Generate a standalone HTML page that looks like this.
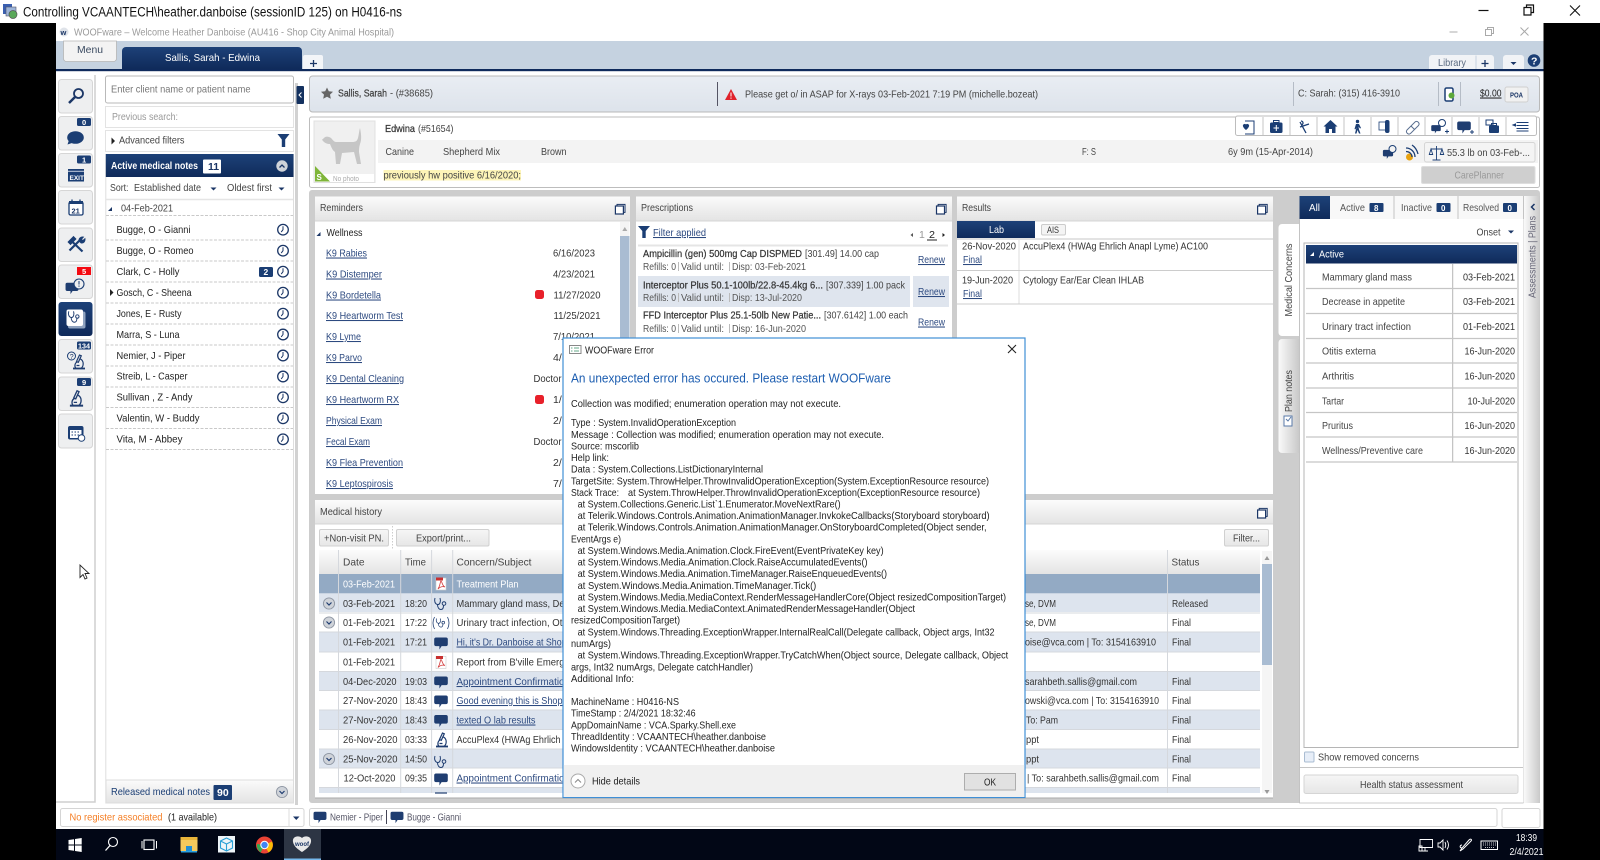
<!DOCTYPE html>
<html><head><meta charset="utf-8"><title>WOOFware</title>
<style>
html,body{margin:0;padding:0;background:#000;width:1600px;height:860px;overflow:hidden}
svg{display:block;filter:blur(.3px)}
text{font-family:"Liberation Sans",sans-serif;font-size:10.5px;fill:#333;white-space:pre}
.l{fill:#2d4a80;text-decoration:underline}
.w{fill:#fff}
.g{fill:#999}
.n{fill:#1b3666}
.b{font-weight:bold}
.s{stroke:#333;stroke-width:.22px}
.d{fill:#222}
</style></head><body>
<svg width="1600" height="860" viewBox="0 0 1600 860" xmlns="http://www.w3.org/2000/svg">
<defs>
<linearGradient id="nav" x1="0" y1="0" x2="0" y2="1"><stop offset="0" stop-color="#1d4178"/><stop offset="1" stop-color="#0f2a5a"/></linearGradient>
<linearGradient id="hd" x1="0" y1="0" x2="0" y2="1"><stop offset="0" stop-color="#fbfbfb"/><stop offset="1" stop-color="#e3e3e3"/></linearGradient>
<linearGradient id="cb" x1="0" y1="0" x2="0" y2="1"><stop offset="0" stop-color="#e9edf3"/><stop offset="1" stop-color="#dde3eb"/></linearGradient>
<linearGradient id="rail" x1="0" y1="0" x2="1" y2="0"><stop offset="0" stop-color="#fafafa"/><stop offset="1" stop-color="#c9c9c9"/></linearGradient>
<linearGradient id="btn" x1="0" y1="0" x2="0" y2="1"><stop offset="0" stop-color="#f6f6f6"/><stop offset="1" stop-color="#e6e6e6"/></linearGradient>
<g id="clk"><circle r="5.3" fill="#fff" stroke="#1b3666" stroke-width="1.3"/><path d="M0-3.5V0L-1.8 2.4" fill="none" stroke="#1b3666" stroke-width="1"/></g>
<g id="bub"><path d="M-5-5.5h10a1.8 1.8 0 0 1 1.8 1.8v5a1.8 1.8 0 0 1-1.8 1.8H0.6L-1.6 6.5V3.1H-5a1.8 1.8 0 0 1-1.8-1.8v-5A1.8 1.8 0 0 1-5-5.5z" fill="#1f3d70"/></g>
<g id="cpy"><rect x="-3.4" y="-4.6" width="8" height="8" fill="#fff" stroke="#1b3666" stroke-width="1"/><rect x="-5" y="-3" width="8" height="8" fill="#fff" stroke="#1b3666" stroke-width="1.2"/></g>
<g id="pdf"><rect x="-5" y="-6" width="10" height="12" fill="#fff" stroke="#ccc" stroke-width=".6"/><rect x="-5" y="-6.5" width="7" height="3" fill="#c83030"/><path d="M-3 5C0 0-1-3 0-3S1 2 4 3C1 2-1 3-3 5z" fill="none" stroke="#d23b3b" stroke-width=".8"/></g>
<g id="ste" fill="none" stroke="#1f3d70" stroke-width="1"><path d="M-6-6c-1 3 0 6 2.500 6.500S0-3-1-6M-3.500 .5c0 3 1.500 5 3.500 5s2.500-2 2.500-4"/><circle cx="3" cy="-.5" r="1.800"/></g>
<g id="mic" fill="none" stroke="#1f3d70" stroke-width="1.200"><path d="M-6 6.500h12" stroke-width="1.800"/><path d="M-3 6.500C-5 4-4 1-2 0M.5-7l-3 6.500 1.800.8 3-6.500zM1.500-3C5-1 5 4 2 6.500M-2.500 3.500h3"/></g>
<g id="chv"><circle r="5.600" fill="#cfd3d9" stroke="#8e96a3" stroke-width=".9"/><path d="M-2.500-1L0 1.500 2.500-1" fill="none" stroke="#1f3d70" stroke-width="1.200"/></g>
</defs>

<rect width="1600" height="860" fill="#000"/>
<rect width="1600" height="23" fill="#fff"/>
<rect x="3" y="4" width="9" height="10" fill="#3a5fb0"/><rect x="6" y="7" width="10" height="9" fill="#9db4d8" stroke="#556" stroke-width=".6"/><circle cx="13" cy="14.500" r="4" fill="#5aa85a" stroke="#555" stroke-width=".7"/>
<text x="23" y="16.500" style="font-size:13.500px;fill:#111" textLength="379" lengthAdjust="spacingAndGlyphs">Controlling VCAANTECH\heather.danboise (sessionID 125) on H0416-ns</text>
<path d="M1478.500 10.500h10" stroke="#111" stroke-width="1.200"/>
<path d="M1524 7.500h7v7.500h-7zM1526.500 7.500V5h7v7.500h-2.500" fill="none" stroke="#111" stroke-width="1.200"/>
<path d="M1570 5.500l10 10M1580 5.500l-10 10" stroke="#111" stroke-width="1.100"/>

<!-- APP -->
<rect x="56" y="23" width="1487.500" height="806" fill="#fff"/>
<circle cx="64" cy="32" r="4.500" fill="#dfe3e9"/><text x="60.500" y="35" class="b n" style="font-size:7.500px">w</text>
<text x="74" y="35.500" style="fill:#9a9a9a" textLength="320" lengthAdjust="spacingAndGlyphs">WOOFware – Welcome Heather Danboise (AU416 - Shop City Animal Hospital)</text>
<path d="M1449.500 32h8" stroke="#bbb" stroke-width="1.200"/>
<path d="M1485.500 29.500h6v6h-6zM1487.500 29.500V27.500h6v6h-2" fill="none" stroke="#aaa"/>
<path d="M1520.500 27.500l8 8M1528.500 27.500l-8 8" stroke="#aaa"/>
<rect x="56" y="41" width="1487.500" height="28" fill="#c5d2e0"/>
<rect x="56" y="69" width="1487.500" height="2.200" fill="#0f2a5c"/>
<path d="M63.500 41h53v17.500a3 3 0 0 1-3 3h-47a3 3 0 0 1-3-3z" fill="#f3f3f3" stroke="#b5b5b5" stroke-width=".8"/>
<text x="77" y="53" style="fill:#3a4a60" textLength="26" lengthAdjust="spacingAndGlyphs">Menu</text>
<path d="M122 69V51a4 4 0 0 1 4-4h172a4 4 0 0 1 4 4v18z" fill="url(#nav)"/>
<text x="165" y="61" class="w" textLength="95" lengthAdjust="spacingAndGlyphs">Sallis, Sarah - Edwina</text>
<path d="M303 69V57a2 2 0 0 1 2-2h16a2 2 0 0 1 2 2v12z" fill="#f3f5f8"/>
<path d="M310 63.500h7M313.500 60v7" stroke="#1b3666" stroke-width="1.300"/>
<path d="M1429 69V58a3 3 0 0 1 3-3h59a3 3 0 0 1 3 3v11z" fill="#f1f3f6"/><path d="M1476 55.500V69" stroke="#c5d2e0"/>
<text x="1438" y="66" style="fill:#5a6a80" textLength="28" lengthAdjust="spacingAndGlyphs">Library</text>
<path d="M1481.500 63.500h7M1485 60v7" stroke="#1b3666" stroke-width="1.300"/>
<path d="M1503 69V58a3 3 0 0 1 3-3h15a3 3 0 0 1 3 3v11z" fill="#f1f3f6"/><path d="M1510.500 62h6l-3 3z" fill="#1b3666"/>
<circle cx="1534" cy="60.500" r="6.300" fill="#1b3e74"/><text x="1531" y="64.500" class="w b" style="font-size:10.500px">?</text>

<!-- NAV COLUMN -->
<path d="M95 75V802H56" fill="none" stroke="#cfcfcf" stroke-width="1.500"/>
<g fill="#eeeff0" stroke="#d6d6d6">
<rect x="58.500" y="79.500" width="34" height="33.500" rx="3"/><rect x="58.500" y="116.500" width="34" height="33.500" rx="3"/><rect x="58.500" y="153.500" width="34" height="33.500" rx="3"/><rect x="58.500" y="190.500" width="34" height="33.500" rx="3"/><rect x="58.500" y="228" width="34" height="33.500" rx="3"/><rect x="58.500" y="265" width="34" height="33.500" rx="3"/><rect x="58.500" y="339.500" width="34" height="33.500" rx="3"/><rect x="58.500" y="377" width="34" height="33.500" rx="3"/><rect x="58.500" y="414" width="34" height="34" rx="3"/>
</g>
<rect x="58.500" y="302" width="34" height="34" rx="3" fill="url(#nav)"/>
<circle cx="78.500" cy="93.500" r="4.500" fill="none" stroke="#1b3666" stroke-width="1.800"/><path d="M75 97l-6 6" stroke="#1b3666" stroke-width="2.500"/>
<ellipse cx="75.500" cy="137.500" rx="8.300" ry="6.300" fill="#1b3e74"/><path d="M69 140l-1.500 4.500 6-2z" fill="#1b3e74"/>
<rect x="68" y="169" width="16" height="12.500" fill="#1b3e74"/><rect x="68" y="170.800" width="16" height="1" fill="#c5cede"/><text x="69.500" y="180" class="w b" style="font-size:6.500px">EXIT</text>
<rect x="69" y="202" width="14" height="13" rx="1.500" fill="#fff" stroke="#1b3e74" stroke-width="1.300"/><rect x="69" y="201" width="14" height="3" fill="#1b3e74"/><path d="M72 199.500v3M80 199.500v3" stroke="#1b3e74" stroke-width="1.300"/><text x="71.500" y="213.500" class="n b" style="font-size:7.500px">21</text>
<g fill="none" stroke="#1b3e74"><path d="M71 240.500l11.500 11" stroke-width="2.200"/><path d="M68 242l5.500-5.500 2.500 2.500-5.500 5.500z" fill="#1b3e74" stroke-width=".8"/><path d="M69.500 250.500l10-10" stroke-width="2.200"/><path d="M79 241c-.5-2.500 1.500-4.500 4.500-4l-2 2.200 1.300 1.300 2.200-2c.5 3-1.500 5-4 4.500z" fill="#1b3e74" stroke-width=".8"/></g>
<use href="#bub" transform="translate(72,288) scale(.95)"/>
<circle cx="79" cy="284" r="5" fill="#eeeff0" stroke="#1b3e74" stroke-width="1.100"/><path d="M79 281v3.500M79 285.500v1.200" stroke="#1b3e74"/>
<rect x="68" y="311.500" width="17.500" height="17" rx="2" fill="#8fa3c0"/><rect x="66.500" y="309.500" width="16.500" height="16.500" rx="2" fill="#fff"/><use href="#ste" transform="translate(74.500,317) scale(.95)"/>
<use href="#mic" transform="translate(79,362)"/><circle cx="71.500" cy="356" r="4" fill="none" stroke="#1b3e74"/><text x="69.700" y="359" class="n" style="font-size:7px">?</text>
<use href="#mic" transform="translate(76.500,398.500) scale(1.100)"/>
<rect x="68" y="426" width="15.500" height="13.500" rx="2" fill="#1b3e74"/><rect x="70" y="430" width="11.500" height="8" fill="#fff"/><path d="M71.500 432h9M71.500 435h9" stroke="#1b3e74" stroke-dasharray="1.500 1.500"/><circle cx="81.500" cy="438" r="3.300" fill="#fff" stroke="#1b3e74"/>
<rect x="77" y="118" width="14" height="8" rx="1.500" fill="#1b3e74"/><text x="82" y="125" class="w b" style="font-size:7.500px">0</text>
<rect x="77" y="155.500" width="14" height="8" rx="1.500" fill="#1b3e74"/><text x="82" y="162.500" class="w b" style="font-size:7.500px">1</text>
<rect x="77" y="267" width="14" height="8" fill="#f40a12"/><text x="82" y="274" class="w b" style="font-size:7.500px">5</text>
<rect x="77" y="341.500" width="14" height="8" rx="1.500" fill="#1b3e74"/><text x="78" y="348.500" class="w b" style="font-size:7px" textLength="12" lengthAdjust="spacingAndGlyphs">134</text>
<rect x="77" y="378" width="14" height="8" rx="1.500" fill="#1b3e74"/><text x="82" y="385" class="w b" style="font-size:7.500px">9</text>

<!-- SEARCH PANEL -->
<rect x="105.500" y="76" width="188" height="27" rx="2" fill="#fff" stroke="#b9b9b9"/>
<text x="111" y="92.500" style="fill:#777" textLength="139.500" lengthAdjust="spacingAndGlyphs">Enter client name or patient name</text>
<rect x="105.500" y="106.500" width="188" height="21" fill="#fff" stroke="#e3e3e3"/>
<text x="112" y="120" style="fill:#999" textLength="66" lengthAdjust="spacingAndGlyphs">Previous search:</text>
<rect x="105.500" y="130.500" width="188" height="21" fill="#fff" stroke="#e3e3e3"/>
<path d="M111.500 137.500l3.500 3.500-3.500 3.500z" fill="#222"/>
<text x="119" y="143.500" style="fill:#444" textLength="65.500" lengthAdjust="spacingAndGlyphs">Advanced filters</text>
<path d="M277.500 134h12l-4.300 5.500V147h-3.400v-7.500z" fill="#1b3e74"/>
<path d="M105.800 154v649h187.700V154" fill="#fff" stroke="#dedede"/>
<rect x="105.800" y="154" width="187.700" height="23" fill="url(#nav)"/>
<text x="111" y="169" class="w b" textLength="87" lengthAdjust="spacingAndGlyphs">Active medical notes</text>
<rect x="203" y="159.500" width="18" height="14" rx="1" fill="#fff"/><text x="208" y="170" class="n b">11</text>
<circle cx="282" cy="166" r="5.700" fill="#cfd3d9"/><path d="M279.500 167.500L282 165l2.500 2.500" fill="none" stroke="#1b3666" stroke-width="1.300"/>
<text x="110" y="191" style="fill:#444" textLength="18.500" lengthAdjust="spacingAndGlyphs">Sort:</text>
<text x="134" y="191" style="fill:#444" textLength="67" lengthAdjust="spacingAndGlyphs">Established date</text>
<path d="M210.500 187.500h6l-3 3z" fill="#1b3666"/>
<text x="227" y="191" style="fill:#444" textLength="45" lengthAdjust="spacingAndGlyphs">Oldest first</text>
<path d="M278.500 187.500h6l-3 3z" fill="#1b3666"/>
<path d="M106 199.500h187" stroke="#e5e5e5" stroke-width="1.500"/>
<path d="M108 211l4-4v4z" fill="#1b3666"/>
<text x="121" y="211.500" style="fill:#444" textLength="52" lengthAdjust="spacingAndGlyphs">04-Feb-2021</text>
<g stroke="#c9c9c9" stroke-dasharray="3 1.500" fill="none"><path d="M106 215.500h187M106 240h187M106 261h187M106 282h187M106 303h187M106 324h187M106 345h187M106 366h187M106 387h187M106 407.500h187M106 428.500h187M106 449.500h187"/></g>
<g class="d">
<text x="116.500" y="233" class="d" textLength="74" lengthAdjust="spacingAndGlyphs">Bugge, O - Gianni</text>
<text x="116.500" y="254" class="d" textLength="77" lengthAdjust="spacingAndGlyphs">Bugge, O - Romeo</text>
<text x="116.500" y="275" class="d" textLength="63" lengthAdjust="spacingAndGlyphs">Clark, C - Holly</text>
<text x="116.500" y="296" class="d" textLength="75" lengthAdjust="spacingAndGlyphs">Gosch, C - Sheena</text>
<text x="116.500" y="317" class="d" textLength="65" lengthAdjust="spacingAndGlyphs">Jones, E - Rusty</text>
<text x="116.500" y="338" class="d" textLength="63" lengthAdjust="spacingAndGlyphs">Marra, S - Luna</text>
<text x="116.500" y="359" class="d" textLength="69" lengthAdjust="spacingAndGlyphs">Nemier, J - Piper</text>
<text x="116.500" y="379.500" class="d" textLength="71" lengthAdjust="spacingAndGlyphs">Streib, L - Casper</text>
<text x="116.500" y="400.500" class="d" textLength="76" lengthAdjust="spacingAndGlyphs">Sullivan , Z - Andy</text>
<text x="116.500" y="421.500" class="d" textLength="83" lengthAdjust="spacingAndGlyphs">Valentin, W - Buddy</text>
<text x="116.500" y="442.500" class="d" textLength="66" lengthAdjust="spacingAndGlyphs">Vita, M - Abbey</text>
</g>
<path d="M110 289l3.500 3.500-3.500 3.500z" fill="#222"/>
<use href="#clk" x="283" y="229.700"/><use href="#clk" x="283" y="250.700"/><use href="#clk" x="283" y="271.700"/><use href="#clk" x="283" y="292.700"/><use href="#clk" x="283" y="313.700"/><use href="#clk" x="283" y="334.500"/><use href="#clk" x="283" y="355.500"/><use href="#clk" x="283" y="376.500"/><use href="#clk" x="283" y="397.300"/><use href="#clk" x="283" y="418.300"/><use href="#clk" x="283" y="439.300"/>
<rect x="259" y="267" width="14" height="10" rx="1.500" fill="#1b3e74"/><text x="263.500" y="275" class="w b" style="font-size:8.500px">2</text>
<rect x="106" y="780" width="187.500" height="23" fill="url(#hd)" stroke="#ddd"/>
<text x="111" y="795" style="fill:#1b3e74" textLength="99" lengthAdjust="spacingAndGlyphs">Released medical notes</text>
<rect x="213.500" y="785" width="18.500" height="15" rx="1" fill="#1b3e74"/><text x="217" y="796" class="w b">90</text>
<use href="#chv" x="282" y="792"/>
<rect x="295" y="83" width="3" height="722" fill="#d2d2d2"/>
<rect x="296.500" y="86" width="7.500" height="18" rx="1" fill="#14315f"/><path d="M301.500 92.500l-2.500 2.500 2.500 2.500" fill="none" stroke="#fff"/>
<path d="M80 565v12.500l3-3 2 4.500 2-1-2-4.500h4z" fill="#fff" stroke="#222" stroke-width=".9"/>

<!-- CLIENT BAR -->
<rect x="309.500" y="76" width="1230" height="36" rx="3" fill="url(#cb)" stroke="#b9b9b9"/>
<path d="M327 87.500l1.800 3.700 4.200.5-3 2.900.8 4.100-3.800-2-3.800 2 .8-4.100-3-2.900 4.200-.5z" fill="#666"/>
<text x="338" y="96.500" class="s" style="fill:#444" textLength="49" lengthAdjust="spacingAndGlyphs">Sallis, Sarah</text>
<text x="390" y="96.500" style="fill:#444" textLength="43" lengthAdjust="spacingAndGlyphs">- (#38685)</text>
<path d="M717.500 82v24" stroke="#445" stroke-width=".9"/>
<path d="M731 89l6 11h-12z" fill="#e0222b"/><path d="M731 92.500v4M731 97.500v1.200" stroke="#fff"/>
<text x="745" y="97.500" style="fill:#444" textLength="293" lengthAdjust="spacingAndGlyphs">Please get o/ in ASAP for X-rays 03-Feb-2021 7:19 PM (michelle.bozeat)</text>
<path d="M1293.500 82v24M1438.500 82v24M1460.500 82v24" stroke="#b5bcc6"/>
<text x="1298" y="96.500" style="fill:#444" textLength="102" lengthAdjust="spacingAndGlyphs">C: Sarah: (315) 416-3910</text>
<rect x="1445" y="88" width="8" height="13" rx="1.500" fill="#fff" stroke="#1b3e74" stroke-width="1.500"/><circle cx="1451.500" cy="95.500" r="3" fill="#5ca83a"/>
<text x="1480" y="96.500" class="d" style="text-decoration:underline" textLength="21.500" lengthAdjust="spacingAndGlyphs">$0.00</text>
<rect x="1505" y="87" width="23" height="15" rx="2" fill="#f1f1f1" stroke="#d0d0d0"/><text x="1510" y="97.500" class="n b" style="font-size:7px" textLength="13" lengthAdjust="spacingAndGlyphs">POA</text>

<!-- PATIENT PANEL -->
<rect x="309.500" y="117" width="1230" height="70.500" rx="2" fill="#fff" stroke="#bdbdbd"/>
<rect x="314" y="121" width="61" height="61.500" fill="#f0f0f0" stroke="#e0e0e0"/>
<rect x="315" y="174" width="59" height="8" fill="#fff"/>
<path d="M323 139c2-3 5-3 8-1 2 2 3 4 5 4h16c4 0 5-1 6-4 1-4 1-7 2-10 1 5 2 11 0 16-1 3-1 6-1 8l2 12h-4l-3-12-12 1-2 11h-4l-1-12c-3-2-4-6-5-8-3 0-5-1-7-3-1-1-1-2 0-2z" fill="#c6c6c6"/>
<path d="M315 166v15.500h15z" fill="#7fb539"/><text x="316.500" y="180" class="w b" style="font-size:8px">S</text>
<text x="333" y="181" style="fill:#aaa;font-size:7px" textLength="26" lengthAdjust="spacingAndGlyphs">No photo</text>
<text x="385" y="132" class="s" style="fill:#333" textLength="30" lengthAdjust="spacingAndGlyphs">Edwina</text>
<text x="418" y="132" style="fill:#444" textLength="35.500" lengthAdjust="spacingAndGlyphs">(#51654)</text>
<rect x="378" y="140" width="1160" height="23" fill="#f3f3f3"/>
<text x="385.500" y="155" style="fill:#444" textLength="28.500" lengthAdjust="spacingAndGlyphs">Canine</text>
<text x="443" y="155" style="fill:#444" textLength="57" lengthAdjust="spacingAndGlyphs">Shepherd Mix</text>
<text x="541" y="155" style="fill:#444" textLength="25.500" lengthAdjust="spacingAndGlyphs">Brown</text>
<text x="1082" y="155" style="fill:#444" textLength="14" lengthAdjust="spacingAndGlyphs">F: S</text>
<text x="1228" y="155" style="fill:#444" textLength="85" lengthAdjust="spacingAndGlyphs">6y 9m (15-Apr-2014)</text>
<rect x="383.500" y="170" width="137.500" height="10.500" fill="#fdf4b8"/>
<text x="383.500" y="178.500" style="fill:#444" textLength="137.500" lengthAdjust="spacingAndGlyphs">previously hw positive 6/16/2020;</text>
<!-- toolbar -->
<rect x="1235.500" y="116" width="301" height="19.500" rx="2" fill="#fff" stroke="#bdbdbd"/>
<path d="M1263 117v18M1290 117v18M1317 117v18M1344 117v18M1371 117v18M1398 117v18M1425 117v18M1452 117v18M1479 117v18M1506 117v18" stroke="#c5c5c5"/>
<g fill="#1b3e74" stroke="none">
<path d="M1245 121h9v13h-9" fill="none" stroke="#1b3e74"/><path d="M1243 125c1-1.500 3-1.500 3 0 0-1.500 2-1.500 3 0 .6 1.500-1.500 4-3 5-1.500-1-3.600-3.500-3-5z"/>
<rect x="1270" y="122.500" width="12.500" height="10.500" rx="1.500"/><rect x="1273.500" y="120.500" width="5.500" height="2" fill="none" stroke="#1b3e74"/><path d="M1276.300 125v6M1273.500 128h5.500" stroke="#fff"/>
<path d="M1300 122l6 11M1301 121a2 2 0 1 1 0 4M1309 124l-9 3" fill="none" stroke="#1b3e74" stroke-width="1.300"/>
<path d="M1330.500 120l7 6.500h-2v6.500h-3.500v-4h-3v4h-3.500v-6.500h-2z"/>
<circle cx="1357.500" cy="121.500" r="1.700"/><path d="M1356 124h3l2 4-1 .5-1.500-2 .5 3 1.500 4h-1.500l-1.500-3.500-1 3.500h-1.500l1.500-6-1 2-1-.5z"/>
<rect x="1379" y="122" width="8" height="8" fill="none" stroke="#1b3e74" stroke-width=".8"/><rect x="1385" y="120" width="4.500" height="13" rx="2"/>
<path d="M1407 130l8-8a2.500 2.500 0 0 1 3.500 3.500l-8 8a2.500 2.500 0 0 1-3.500-3.500zM1411 126l3.500 3.500" fill="none" stroke="#5a6f90"/>
<use href="#bub" transform="translate(1436,129) scale(.7)"/><circle cx="1442" cy="123" r="3.500" fill="#fff" stroke="#1b3e74"/><path d="M1445 131.500h4M1447 129.500v4" stroke="#1b3e74"/>
<use href="#bub" transform="translate(1464,127)"/><path d="M1470 132h4M1472 130v4" stroke="#1b3e74"/>
<rect x="1486" y="120" width="7" height="5" fill="#fff" stroke="#1b3e74"/><rect x="1489" y="125.500" width="10" height="7.500" rx="1"/><rect x="1491.500" y="123.500" width="5" height="2" fill="none" stroke="#1b3e74"/>
<path d="M1513 125l2.500-1v2zM1516.500 122.500h12M1516.500 125.500h12M1516.500 128.500h12M1516.500 131h12" stroke="#1b3e74" stroke-width="1"/>
</g>
<use href="#bub" transform="translate(1388,154) scale(.75)"/><circle cx="1392.500" cy="149" r="3.500" fill="#f3f3f3" stroke="#1b3e74"/><circle cx="1409.500" cy="157" r="3.500" fill="#e8a210"/>
<path d="M1406 148c5 0 9 4 9 9M1406 151.500c3 0 6 2 6 5.500M1412 145c3 2 5 5 6 9" fill="none" stroke="#1b3e74" stroke-width="1.300"/>
<rect x="1424.500" y="142.500" width="110.500" height="19.500" rx="2" fill="#f4f4f4" stroke="#d5d5d5"/>
<path d="M1431 149h11M1436.500 146v14M1432.500 160h8M1431 149l-1.700 5.500h3.400zM1442 149l-1.700 5.500h3.400z" fill="none" stroke="#1b3e74" stroke-width=".9"/>
<text x="1447" y="156" style="fill:#444" textLength="83" lengthAdjust="spacingAndGlyphs">55.3 lb on 03-Feb-...</text>
<rect x="1421.500" y="166.500" width="113.500" height="17" rx="1.500" fill="#cfcfcf" stroke="#dedede"/>
<text x="1454.500" y="178.500" class="g" textLength="49.500" lengthAdjust="spacingAndGlyphs">CarePlanner</text>

<!-- CONTENT BG -->
<rect x="309" y="190" width="1231" height="613" rx="3" fill="#cdcdcd"/>

<!-- REMINDERS -->
<rect x="315" y="196.500" width="315" height="297.500" fill="#fff"/>
<rect x="315" y="196.500" width="315" height="24.500" fill="url(#hd)"/>
<path d="M315 221h315" stroke="#d5d5d5"/>
<text x="320" y="211" style="fill:#444" textLength="43" lengthAdjust="spacingAndGlyphs">Reminders</text>
<use href="#cpy" x="620.400" y="209"/>
<rect x="620" y="222" width="9.500" height="272" fill="#f4f4f4"/><rect x="620" y="236" width="9.500" height="200" fill="#a9bcd2"/><path d="M624.800 227l2.500 4h-5z" fill="#aaa"/>
<path d="M316.500 236l4-4v4z" fill="#1b3666"/>
<text x="326.500" y="236" class="d" textLength="36" lengthAdjust="spacingAndGlyphs">Wellness</text>
<g>
<text x="326" y="256.500" class="l" textLength="41" lengthAdjust="spacingAndGlyphs">K9 Rabies</text>
<text x="326" y="277.500" class="l" textLength="56" lengthAdjust="spacingAndGlyphs">K9 Distemper</text>
<text x="326" y="298.500" class="l" textLength="55" lengthAdjust="spacingAndGlyphs">K9 Bordetella</text>
<text x="326" y="319" class="l" textLength="77" lengthAdjust="spacingAndGlyphs">K9 Heartworm Test</text>
<text x="326" y="340" class="l" textLength="35" lengthAdjust="spacingAndGlyphs">K9 Lyme</text>
<text x="326" y="361" class="l" textLength="36" lengthAdjust="spacingAndGlyphs">K9 Parvo</text>
<text x="326" y="382" class="l" textLength="78" lengthAdjust="spacingAndGlyphs">K9 Dental Cleaning</text>
<text x="326" y="403" class="l" textLength="73" lengthAdjust="spacingAndGlyphs">K9 Heartworm RX</text>
<text x="326" y="424" class="l" textLength="56" lengthAdjust="spacingAndGlyphs">Physical Exam</text>
<text x="326" y="445" class="l" textLength="44" lengthAdjust="spacingAndGlyphs">Fecal Exam</text>
<text x="326" y="466" class="l" textLength="77" lengthAdjust="spacingAndGlyphs">K9 Flea Prevention</text>
<text x="326" y="487" class="l" textLength="67" lengthAdjust="spacingAndGlyphs">K9 Leptospirosis</text>
</g>
<text x="553" y="256.500" textLength="42" lengthAdjust="spacingAndGlyphs">6/16/2023</text>
<text x="553" y="277.500" textLength="42" lengthAdjust="spacingAndGlyphs">4/23/2021</text>
<rect x="535" y="290" width="9" height="9" rx="2.500" fill="#e8202a"/>
<text x="553.500" y="298.500" textLength="47" lengthAdjust="spacingAndGlyphs">11/27/2020</text>
<text x="553.500" y="319" textLength="47" lengthAdjust="spacingAndGlyphs">11/25/2021</text>
<text x="553" y="340" textLength="42" lengthAdjust="spacingAndGlyphs">7/10/2021</text>
<text x="553" y="361">4/</text>
<text x="533.500" y="382" textLength="28" lengthAdjust="spacingAndGlyphs">Doctor</text>
<rect x="535" y="395" width="9" height="9" rx="2.500" fill="#e8202a"/>
<text x="553" y="403">1/</text><text x="553" y="424">2/</text>
<text x="533.500" y="445" textLength="28" lengthAdjust="spacingAndGlyphs">Doctor</text>
<text x="553" y="466">2/</text><text x="553" y="487">7/</text>

<!-- PRESCRIPTIONS -->
<rect x="636" y="196.500" width="316" height="297.500" fill="#fff"/>
<rect x="636" y="196.500" width="316" height="24.500" fill="url(#hd)"/>
<path d="M636 221h316" stroke="#d5d5d5"/>
<text x="641" y="211" style="fill:#444" textLength="52" lengthAdjust="spacingAndGlyphs">Prescriptions</text>
<use href="#cpy" x="941.500" y="209"/>
<path d="M638 226h12l-4.300 5v7h-3.400v-7z" fill="#1b3e74"/>
<text x="653" y="236" class="l" textLength="53" lengthAdjust="spacingAndGlyphs">Filter applied</text>
<path d="M913 233l-2.500 2 2.500 2z" fill="#555"/><text x="919" y="238" class="g">1</text><text x="929" y="238" class="d" textLength="6" lengthAdjust="spacingAndGlyphs">2</text><path d="M927 240h10" stroke="#222"/><path d="M942.500 233l2.500 2-2.500 2z" fill="#222"/>
<path d="M638 245.500h310" stroke="#e5e5e5" stroke-width="2"/>
<text x="643" y="257" class="s" style="fill:#333" textLength="159" lengthAdjust="spacingAndGlyphs">Ampicillin (gen) 500mg Cap DISPMED</text>
<text x="805" y="257" style="fill:#444" textLength="74" lengthAdjust="spacingAndGlyphs">[301.49] 14.00 cap</text>
<text x="643" y="270" style="fill:#555" textLength="33" lengthAdjust="spacingAndGlyphs">Refills: 0</text><path d="M678.500 262v9" stroke="#bbb"/>
<text x="681" y="270" style="fill:#555" textLength="43" lengthAdjust="spacingAndGlyphs">Valid until:</text><path d="M729.500 262v9" stroke="#bbb"/>
<text x="732" y="270" style="fill:#555" textLength="74" lengthAdjust="spacingAndGlyphs">Disp: 03-Feb-2021</text>
<text x="918" y="263" class="l" textLength="27" lengthAdjust="spacingAndGlyphs">Renew</text>
<rect x="638" y="276" width="272" height="31" fill="#dfe5ee"/><rect x="913" y="276" width="36" height="31" fill="#dfe5ee"/>
<text x="643" y="288.500" class="s" style="fill:#333" textLength="180" lengthAdjust="spacingAndGlyphs">Interceptor Plus 50.1-100lb/22.8-45.4kg 6...</text>
<text x="826" y="288.500" style="fill:#444" textLength="79" lengthAdjust="spacingAndGlyphs">[307.339] 1.00 pack</text>
<text x="643" y="301" style="fill:#555" textLength="33" lengthAdjust="spacingAndGlyphs">Refills: 0</text><path d="M678.500 293v9" stroke="#bbb"/>
<text x="681" y="301" style="fill:#555" textLength="43" lengthAdjust="spacingAndGlyphs">Valid until:</text><path d="M729.500 293v9" stroke="#bbb"/>
<text x="732" y="301" style="fill:#555" textLength="70" lengthAdjust="spacingAndGlyphs">Disp: 13-Jul-2020</text>
<text x="918" y="295" class="l" textLength="27" lengthAdjust="spacingAndGlyphs">Renew</text>
<text x="643" y="318.500" class="s" style="fill:#333" textLength="178" lengthAdjust="spacingAndGlyphs">FFD Interceptor Plus 25.1-50lb New Patie...</text>
<text x="824" y="318.500" style="fill:#444" textLength="84" lengthAdjust="spacingAndGlyphs">[307.6142] 1.00 each</text>
<text x="643" y="332" style="fill:#555" textLength="33" lengthAdjust="spacingAndGlyphs">Refills: 0</text><path d="M678.500 324v9" stroke="#bbb"/>
<text x="681" y="332" style="fill:#555" textLength="43" lengthAdjust="spacingAndGlyphs">Valid until:</text><path d="M729.500 324v9" stroke="#bbb"/>
<text x="732" y="332" style="fill:#555" textLength="74" lengthAdjust="spacingAndGlyphs">Disp: 16-Jun-2020</text>
<text x="918" y="325.500" class="l" textLength="27" lengthAdjust="spacingAndGlyphs">Renew</text>

<!-- RESULTS -->
<rect x="957" y="196.500" width="316" height="297.500" fill="#fff"/>
<rect x="957" y="196.500" width="316" height="24.500" fill="url(#hd)"/>
<path d="M957 221h316" stroke="#d5d5d5"/>
<text x="962" y="211" style="fill:#444" textLength="29" lengthAdjust="spacingAndGlyphs">Results</text>
<use href="#cpy" x="1262.600" y="209"/>
<rect x="957" y="221" width="78" height="18" fill="url(#nav)"/><text x="989" y="233" class="w" textLength="15" lengthAdjust="spacingAndGlyphs">Lab</text>
<rect x="1041.500" y="224.500" width="24" height="10.500" rx="1.500" fill="#f4f4f4" stroke="#ccc"/><text x="1047" y="233" style="fill:#333;font-size:9px" textLength="12" lengthAdjust="spacingAndGlyphs">AIS</text>
<path d="M957 239h316" stroke="#e3e3e3" stroke-width="2"/>
<path d="M1019 240v64" stroke="#ddd"/>
<path d="M957 270.500h316M957 304h316" stroke="#ccc"/>
<text x="962" y="249.500" textLength="54" lengthAdjust="spacingAndGlyphs">26-Nov-2020</text>
<text x="1023" y="249.500" textLength="185" lengthAdjust="spacingAndGlyphs">AccuPlex4 (HWAg Ehrlich Anapl Lyme) AC100</text>
<text x="963" y="263" class="l" textLength="19" lengthAdjust="spacingAndGlyphs">Final</text>
<text x="962" y="283.500" textLength="51" lengthAdjust="spacingAndGlyphs">19-Jun-2020</text>
<text x="1023" y="283.500" textLength="121" lengthAdjust="spacingAndGlyphs">Cytology Ear/Ear Clean IHLAB</text>
<text x="963" y="297" class="l" textLength="19" lengthAdjust="spacingAndGlyphs">Final</text>

<!-- MEDICAL HISTORY -->
<rect x="315" y="500" width="958" height="298" fill="#fff"/>
<rect x="315" y="500" width="958" height="24" fill="url(#hd)"/>
<path d="M315 524h958" stroke="#d5d5d5"/>
<text x="320" y="515" style="fill:#444" textLength="62" lengthAdjust="spacingAndGlyphs">Medical history</text>
<use href="#cpy" x="1262.600" y="513"/>
<rect x="319.500" y="529.500" width="69" height="16.500" rx="1.500" fill="url(#btn)" stroke="#d0d0d0"/>
<text x="324" y="541.500" style="fill:#444" textLength="60" lengthAdjust="spacingAndGlyphs">+Non-visit PN.</text>
<path d="M392.500 526v24" stroke="#ccc" stroke-dasharray="1.500 1.500"/>
<rect x="396.500" y="529.500" width="92.500" height="16.500" rx="1.500" fill="url(#btn)" stroke="#d0d0d0"/>
<text x="416" y="541.500" style="fill:#444" textLength="55" lengthAdjust="spacingAndGlyphs">Export/print...</text>
<rect x="1224.500" y="529.500" width="44" height="16.500" rx="1.500" fill="url(#btn)" stroke="#d0d0d0"/>
<text x="1233" y="541.500" style="fill:#444" textLength="27" lengthAdjust="spacingAndGlyphs">Filter...</text>
<rect x="319" y="550" width="941" height="24" fill="url(#hd)"/>
<rect x="319" y="574" width="941" height="19.500" fill="#93aac4"/>
<g fill="#dde4ee">
<rect x="319" y="594" width="941" height="18"/><rect x="319" y="632.500" width="941" height="19"/><rect x="319" y="672" width="941" height="18.500"/><rect x="319" y="710.500" width="941" height="19"/><rect x="319" y="749" width="941" height="19"/><rect x="319" y="788" width="941" height="5"/>
</g>
<g stroke="#d5d8dd" fill="none"><path d="M338.500 550v243M400.700 550v243M431.600 550v243M452.700 550v243M1167.500 550v243"/>
<path d="M319 613h941M319 632h941M319 652h941M319 671.500h941M319 690.500h941M319 710h941M319 729.500h941M319 749h941M319 768h941M319 787.500h941"/></g>
<rect x="1262" y="551" width="10" height="242" fill="#f5f5f5"/><rect x="1262" y="564" width="10" height="101" fill="#a9bcd2"/>
<path d="M1267 556l2.500 4h-5zM1267 794l2.500-4h-5z" fill="#999"/>
<path d="M315 798h958" stroke="#aaa" stroke-width="1"/>
<text x="343" y="565.500" style="fill:#444" textLength="21.500" lengthAdjust="spacingAndGlyphs">Date</text>
<text x="405" y="565.500" style="fill:#444" textLength="21" lengthAdjust="spacingAndGlyphs">Time</text>
<text x="456.500" y="565.500" style="fill:#444" textLength="75" lengthAdjust="spacingAndGlyphs">Concern/Subject</text>
<text x="1171.500" y="565.500" style="fill:#444" textLength="28" lengthAdjust="spacingAndGlyphs">Status</text>
<g>
<text x="343" y="587.500" class="w" textLength="52" lengthAdjust="spacingAndGlyphs">03-Feb-2021</text>
<text x="343" y="607" textLength="52" lengthAdjust="spacingAndGlyphs">03-Feb-2021</text>
<text x="343" y="626" textLength="52" lengthAdjust="spacingAndGlyphs">01-Feb-2021</text>
<text x="343" y="645.500" textLength="52" lengthAdjust="spacingAndGlyphs">01-Feb-2021</text>
<text x="343" y="665.500" textLength="52" lengthAdjust="spacingAndGlyphs">01-Feb-2021</text>
<text x="343" y="685" textLength="53.500" lengthAdjust="spacingAndGlyphs">04-Dec-2020</text>
<text x="343" y="704" textLength="54.500" lengthAdjust="spacingAndGlyphs">27-Nov-2020</text>
<text x="343" y="723.500" textLength="54.500" lengthAdjust="spacingAndGlyphs">27-Nov-2020</text>
<text x="343" y="743" textLength="54.500" lengthAdjust="spacingAndGlyphs">26-Nov-2020</text>
<text x="343" y="762.500" textLength="54.500" lengthAdjust="spacingAndGlyphs">25-Nov-2020</text>
<text x="343.500" y="781.500" textLength="52" lengthAdjust="spacingAndGlyphs">12-Oct-2020</text>
<text x="405" y="607" textLength="22" lengthAdjust="spacingAndGlyphs">18:20</text>
<text x="405" y="626" textLength="22" lengthAdjust="spacingAndGlyphs">17:22</text>
<text x="405" y="645.500" textLength="22" lengthAdjust="spacingAndGlyphs">17:21</text>
<text x="405" y="685" textLength="22" lengthAdjust="spacingAndGlyphs">19:03</text>
<text x="405" y="704" textLength="22" lengthAdjust="spacingAndGlyphs">18:43</text>
<text x="405" y="723.500" textLength="22" lengthAdjust="spacingAndGlyphs">18:43</text>
<text x="405" y="743" textLength="22" lengthAdjust="spacingAndGlyphs">03:33</text>
<text x="405" y="762.500" textLength="22" lengthAdjust="spacingAndGlyphs">14:50</text>
<text x="405" y="781.500" textLength="22" lengthAdjust="spacingAndGlyphs">09:35</text>
<text x="456.500" y="587.500" class="w" textLength="62" lengthAdjust="spacingAndGlyphs">Treatment Plan</text>
<text x="456.500" y="607" textLength="108" lengthAdjust="spacingAndGlyphs">Mammary gland mass, De</text>
<text x="456.500" y="626" textLength="108" lengthAdjust="spacingAndGlyphs">Urinary tract infection, Oti</text>
<text x="456.500" y="645.500" class="l" textLength="110" lengthAdjust="spacingAndGlyphs">Hi, it's Dr. Danboise at Shop</text>
<text x="456.500" y="665.500" textLength="108" lengthAdjust="spacingAndGlyphs">Report from B'ville Emerg</text>
<text x="456.500" y="685" class="l" textLength="108" lengthAdjust="spacingAndGlyphs">Appointment Confirmatio</text>
<text x="456.500" y="704" class="l" textLength="106" lengthAdjust="spacingAndGlyphs">Good evening this is Shop</text>
<text x="456.500" y="723.500" class="l" textLength="79" lengthAdjust="spacingAndGlyphs">texted O lab results</text>
<text x="456.500" y="743" textLength="104" lengthAdjust="spacingAndGlyphs">AccuPlex4 (HWAg Ehrlich</text>
<text x="456.500" y="781.500" class="l" textLength="108" lengthAdjust="spacingAndGlyphs">Appointment Confirmatio</text>
<text x="1025" y="607" textLength="31" lengthAdjust="spacingAndGlyphs">se, DVM</text>
<text x="1025" y="626" textLength="31" lengthAdjust="spacingAndGlyphs">se, DVM</text>
<text x="1025" y="645.500" textLength="131" lengthAdjust="spacingAndGlyphs">oise@vca.com | To: 3154163910</text>
<text x="1025" y="685" textLength="112" lengthAdjust="spacingAndGlyphs">sarahbeth.sallis@gmail.com</text>
<text x="1025" y="704" textLength="134" lengthAdjust="spacingAndGlyphs">owski@vca.com | To: 3154163910</text>
<text x="1026" y="723.500" textLength="32" lengthAdjust="spacingAndGlyphs">To: Pam</text>
<text x="1026" y="743" textLength="13" lengthAdjust="spacingAndGlyphs">ppt</text>
<text x="1026" y="762.500" textLength="13" lengthAdjust="spacingAndGlyphs">ppt</text>
<text x="1027" y="781.500" textLength="132" lengthAdjust="spacingAndGlyphs">| To: sarahbeth.sallis@gmail.com</text>
<text x="1172" y="607" textLength="36" lengthAdjust="spacingAndGlyphs">Released</text>
<text x="1172" y="626" textLength="19" lengthAdjust="spacingAndGlyphs">Final</text>
<text x="1172" y="645.500" textLength="19" lengthAdjust="spacingAndGlyphs">Final</text>
<text x="1172" y="685" textLength="19" lengthAdjust="spacingAndGlyphs">Final</text>
<text x="1172" y="704" textLength="19" lengthAdjust="spacingAndGlyphs">Final</text>
<text x="1172" y="723.500" textLength="19" lengthAdjust="spacingAndGlyphs">Final</text>
<text x="1172" y="743" textLength="19" lengthAdjust="spacingAndGlyphs">Final</text>
<text x="1172" y="762.500" textLength="19" lengthAdjust="spacingAndGlyphs">Final</text>
<text x="1172" y="781.500" textLength="19" lengthAdjust="spacingAndGlyphs">Final</text>
</g>
<use href="#chv" x="329" y="603.500"/><use href="#chv" x="329" y="622.500"/><use href="#chv" x="329" y="759"/>
<use href="#pdf" x="441" y="584"/><use href="#pdf" x="441" y="662.500"/>
<use href="#ste" x="441" y="604"/><use href="#ste" x="441" y="762"/>
<use href="#ste" transform="translate(441,623) scale(.75)"/><path d="M434.500 617c-2 4-2 8 0 12M447.500 617c2 4 2 8 0 12" fill="none" stroke="#1f3d70" stroke-width=".8"/>
<use href="#bub" x="441" y="643"/><use href="#bub" x="441" y="682"/><use href="#bub" x="441" y="701"/><use href="#bub" x="441" y="720.500"/><use href="#bub" x="441" y="779"/>
<use href="#mic" x="442" y="740"/>
<rect x="435" y="792" width="12" height="2" fill="#1f3d70" opacity=".6"/>

<!-- VERTICAL TABS -->
<path d="M1299 224h-17a3.500 3.500 0 0 0-3.500 3.500v105a3.500 3.500 0 0 0 3.500 3.500h17z" fill="#fff"/>
<path d="M1299 339h-17a3.500 3.500 0 0 0-3.500 3.500v107a3.500 3.500 0 0 0 3.500 3.500h17z" fill="url(#rail)"/>
<text transform="translate(1292,316.500) rotate(-90)" style="fill:#444" textLength="73" lengthAdjust="spacingAndGlyphs">Medical Concerns</text>
<text transform="translate(1292,412) rotate(-90)" style="fill:#444" textLength="42" lengthAdjust="spacingAndGlyphs">Plan notes</text>
<rect x="1284" y="416" width="8" height="10" fill="#fff" stroke="#5a7aa8"/><path d="M1286 419l2 2 3-4" fill="none" stroke="#5a7aa8"/>

<!-- RIGHT PANEL -->
<rect x="1299.500" y="196" width="224" height="607" fill="#fff"/>
<path d="M1299.500 219V803h224" fill="none" stroke="#bbb" stroke-width=".8"/>
<rect x="1299.500" y="196" width="30.500" height="23" fill="url(#nav)"/>
<text x="1309" y="211" class="w" textLength="11" lengthAdjust="spacingAndGlyphs">All</text>
<rect x="1330" y="196" width="193.500" height="23" fill="#f8f8f8"/>
<path d="M1394 196v23M1458 196v23M1523.500 196v23" stroke="#c4c4c4"/>
<text x="1340" y="211" style="fill:#555" textLength="25" lengthAdjust="spacingAndGlyphs">Active</text>
<rect x="1369.500" y="203" width="14" height="9" rx="1" fill="#1b3e74"/><text x="1374" y="211" class="w b" style="font-size:8px">8</text>
<text x="1401" y="211" style="fill:#555" textLength="31" lengthAdjust="spacingAndGlyphs">Inactive</text>
<rect x="1436.500" y="203" width="14" height="9" rx="1" fill="#1b3e74"/><text x="1441" y="211" class="w b" style="font-size:8px">0</text>
<text x="1463" y="211" style="fill:#555" textLength="36" lengthAdjust="spacingAndGlyphs">Resolved</text>
<rect x="1503" y="203" width="14" height="9" rx="1" fill="#1b3e74"/><text x="1507.500" y="211" class="w b" style="font-size:8px">0</text>
<text x="1476.500" y="235.500" style="fill:#444" textLength="24" lengthAdjust="spacingAndGlyphs">Onset</text>
<path d="M1508 230.500h6l-3 3z" fill="#1b3666"/>
<rect x="1304" y="243" width="214" height="504.500" fill="#fff" stroke="#b5b5b5"/>
<rect x="1306" y="245" width="211" height="18.500" fill="url(#nav)"/>
<path d="M1310 256l4-4v4z" fill="#fff"/>
<text x="1319" y="257.500" class="w" textLength="25" lengthAdjust="spacingAndGlyphs">Active</text>
<path d="M1452.700 264v198" stroke="#b5b5b5"/>
<path d="M1306 288.500h211M1306 313.500h211M1306 338.500h211M1306 363h211M1306 388h211M1306 412.500h211M1306 437h211M1306 462h211" stroke="#c5c5c5" stroke-width="1.200"/>
<g style="fill:#444">
<text x="1322" y="280.500" style="fill:#444" textLength="90" lengthAdjust="spacingAndGlyphs">Mammary gland mass</text>
<text x="1322" y="305" style="fill:#444" textLength="83" lengthAdjust="spacingAndGlyphs">Decrease in appetite</text>
<text x="1322" y="330" style="fill:#444" textLength="89" lengthAdjust="spacingAndGlyphs">Urinary tract infection</text>
<text x="1322" y="354.500" style="fill:#444" textLength="54" lengthAdjust="spacingAndGlyphs">Otitis externa</text>
<text x="1322" y="379.500" style="fill:#444" textLength="32" lengthAdjust="spacingAndGlyphs">Arthritis</text>
<text x="1322" y="404.500" style="fill:#444" textLength="22" lengthAdjust="spacingAndGlyphs">Tartar</text>
<text x="1322" y="429" style="fill:#444" textLength="31" lengthAdjust="spacingAndGlyphs">Pruritus</text>
<text x="1322" y="454" style="fill:#444" textLength="101" lengthAdjust="spacingAndGlyphs">Wellness/Preventive care</text>
<text x="1463" y="280.500" textLength="52" lengthAdjust="spacingAndGlyphs">03-Feb-2021</text>
<text x="1463" y="305" textLength="52" lengthAdjust="spacingAndGlyphs">03-Feb-2021</text>
<text x="1463" y="330" textLength="52" lengthAdjust="spacingAndGlyphs">01-Feb-2021</text>
<text x="1464.500" y="354.500" textLength="50.500" lengthAdjust="spacingAndGlyphs">16-Jun-2020</text>
<text x="1464.500" y="379.500" textLength="50.500" lengthAdjust="spacingAndGlyphs">16-Jun-2020</text>
<text x="1467.500" y="404.500" textLength="47.500" lengthAdjust="spacingAndGlyphs">10-Jul-2020</text>
<text x="1464.500" y="429" textLength="50.500" lengthAdjust="spacingAndGlyphs">16-Jun-2020</text>
<text x="1464.500" y="454" textLength="50.500" lengthAdjust="spacingAndGlyphs">16-Jun-2020</text>
</g>
<rect x="1304.500" y="752" width="9.500" height="10" rx="1" fill="#e7eef8" stroke="#a9bcd2"/>
<text x="1318" y="760.500" style="fill:#444" textLength="101" lengthAdjust="spacingAndGlyphs">Show removed concerns</text>
<path d="M1300 767.500h223" stroke="#c5c5c5"/>
<rect x="1304" y="775" width="214" height="18.500" rx="2" fill="url(#btn)" stroke="#d5d5d5"/>
<text x="1360" y="788" style="fill:#444" textLength="103" lengthAdjust="spacingAndGlyphs">Health status assessment</text>
<rect x="1524" y="196" width="16" height="607" fill="url(#rail)"/>
<path d="M1534.500 204l-3 3 3 3" fill="none" stroke="#1b3666" stroke-width="1.500"/>
<text transform="translate(1535.500,298) rotate(-90)" style="fill:#667" textLength="82" lengthAdjust="spacingAndGlyphs">Assessments | Plans</text>

<!-- STATUS BAR -->
<rect x="60.500" y="808.500" width="243.500" height="18" rx="2" fill="#fff" stroke="#d5d5d5"/>
<text x="69.500" y="820.500" style="fill:#f57f25" textLength="93" lengthAdjust="spacingAndGlyphs">No register associated</text>
<text x="168" y="820.500" class="d" textLength="49" lengthAdjust="spacingAndGlyphs">(1 available)</text>
<path d="M289 809v17" stroke="#ddd"/><path d="M293 816.500h6.500l-3.200 3.500z" fill="#1b3666"/>
<rect x="309.500" y="808.500" width="1187.500" height="18" rx="2" fill="#fff" stroke="#d5d5d5"/>
<use href="#bub" transform="translate(320,817) scale(.95)"/>
<text x="330" y="820.500" style="fill:#556;font-size:10px" textLength="53" lengthAdjust="spacingAndGlyphs">Nemier - Piper</text>
<path d="M386.500 810v14" stroke="#445"/>
<use href="#bub" transform="translate(397,817) scale(.95)"/>
<text x="407" y="820.500" style="fill:#556;font-size:10px" textLength="54" lengthAdjust="spacingAndGlyphs">Bugge - Gianni</text>
<rect x="1502" y="808.500" width="38" height="19" rx="2" fill="#fff" stroke="#d5d5d5"/>

<!-- DIALOG -->
<rect x="563" y="338" width="462" height="459.500" fill="#fff" stroke="#3f8fd6" stroke-width="1.200"/>
<rect x="569.500" y="345.500" width="11.500" height="8" fill="#fff" stroke="#888"/><path d="M571 348h1.500M574 348h5M571 351h1.500M574 351h5" stroke="#6a8"/>
<text x="585" y="353.500" class="d" textLength="69" lengthAdjust="spacingAndGlyphs">WOOFware Error</text>
<path d="M1008 345l8 8M1016 345l-8 8" stroke="#222" stroke-width="1.100"/>
<text x="571" y="382.500" style="fill:#1c5db0;font-size:13px" textLength="320" lengthAdjust="spacingAndGlyphs">An unexpected error has occured. Please restart WOOFware</text>
<g class="d">
<text x="571" y="407" class="d" textLength="270" lengthAdjust="spacingAndGlyphs">Collection was modified; enumeration operation may not execute.</text>
<text x="571" y="426" class="d" textLength="165" lengthAdjust="spacingAndGlyphs">Type : System.InvalidOperationException</text>
<text x="571" y="437.800" class="d" textLength="313" lengthAdjust="spacingAndGlyphs">Message : Collection was modified; enumeration operation may not execute.</text>
<text x="571" y="449.400" class="d" textLength="68" lengthAdjust="spacingAndGlyphs">Source: mscorlib</text>
<text x="571" y="461" class="d" textLength="38" lengthAdjust="spacingAndGlyphs">Help link:</text>
<text x="571" y="472.600" class="d" textLength="192" lengthAdjust="spacingAndGlyphs">Data : System.Collections.ListDictionaryInternal</text>
<text x="571" y="484.300" class="d" textLength="418" lengthAdjust="spacingAndGlyphs">TargetSite: System.ThrowHelper.ThrowInvalidOperationException(System.ExceptionResource resource)</text>
<text x="571" y="496" class="d" textLength="48" lengthAdjust="spacingAndGlyphs">Stack Trace:</text>
<text x="628" y="496" class="d" textLength="352" lengthAdjust="spacingAndGlyphs">at System.ThrowHelper.ThrowInvalidOperationException(ExceptionResource resource)</text>
<text x="577.600" y="507.500" class="d" textLength="263" lengthAdjust="spacingAndGlyphs">at System.Collections.Generic.List`1.Enumerator.MoveNextRare()</text>
<text x="577.600" y="519" class="d" textLength="412" lengthAdjust="spacingAndGlyphs">at Telerik.Windows.Controls.Animation.AnimationManager.InvkokeCallbacks(Storyboard storyboard)</text>
<text x="577.600" y="530.700" class="d" textLength="409" lengthAdjust="spacingAndGlyphs">at Telerik.Windows.Controls.Animation.AnimationManager.OnStoryboardCompleted(Object sender,</text>
<text x="571" y="542.300" class="d" textLength="50" lengthAdjust="spacingAndGlyphs">EventArgs e)</text>
<text x="577.600" y="554" class="d" textLength="306" lengthAdjust="spacingAndGlyphs">at System.Windows.Media.Animation.Clock.FireEvent(EventPrivateKey key)</text>
<text x="577.600" y="565.500" class="d" textLength="290" lengthAdjust="spacingAndGlyphs">at System.Windows.Media.Animation.Clock.RaiseAccumulatedEvents()</text>
<text x="577.600" y="577" class="d" textLength="309.500" lengthAdjust="spacingAndGlyphs">at System.Windows.Media.Animation.TimeManager.RaiseEnqueuedEvents()</text>
<text x="577.600" y="589" class="d" textLength="238.700" lengthAdjust="spacingAndGlyphs">at System.Windows.Media.Animation.TimeManager.Tick()</text>
<text x="577.600" y="600.500" class="d" textLength="428.500" lengthAdjust="spacingAndGlyphs">at System.Windows.Media.MediaContext.RenderMessageHandlerCore(Object resizedCompositionTarget)</text>
<text x="577.600" y="612" class="d" textLength="337.500" lengthAdjust="spacingAndGlyphs">at System.Windows.Media.MediaContext.AnimatedRenderMessageHandler(Object</text>
<text x="571" y="623.700" class="d" textLength="109" lengthAdjust="spacingAndGlyphs">resizedCompositionTarget)</text>
<text x="577.600" y="635.300" class="d" textLength="417" lengthAdjust="spacingAndGlyphs">at System.Windows.Threading.ExceptionWrapper.InternalRealCall(Delegate callback, Object args, Int32</text>
<text x="571" y="647" class="d" textLength="40" lengthAdjust="spacingAndGlyphs">numArgs)</text>
<text x="577.600" y="658.700" class="d" textLength="430.600" lengthAdjust="spacingAndGlyphs">at System.Windows.Threading.ExceptionWrapper.TryCatchWhen(Object source, Delegate callback, Object</text>
<text x="571" y="670.300" class="d" textLength="182" lengthAdjust="spacingAndGlyphs">args, Int32 numArgs, Delegate catchHandler)</text>
<text x="571" y="682" class="d" textLength="63" lengthAdjust="spacingAndGlyphs">Additional Info:</text>
<text x="571" y="705" class="d" textLength="108" lengthAdjust="spacingAndGlyphs">MachineName : H0416-NS</text>
<text x="571" y="716.700" class="d" textLength="124.600" lengthAdjust="spacingAndGlyphs">TimeStamp : 2/4/2021 18:32:46</text>
<text x="571" y="728.300" class="d" textLength="165" lengthAdjust="spacingAndGlyphs">AppDomainName : VCA.Sparky.Shell.exe</text>
<text x="571" y="740" class="d" textLength="195" lengthAdjust="spacingAndGlyphs">ThreadIdentity : VCAANTECH\heather.danboise</text>
<text x="571" y="751.700" class="d" textLength="204" lengthAdjust="spacingAndGlyphs">WindowsIdentity : VCAANTECH\heather.danboise</text>
</g>
<rect x="563.600" y="765" width="460.800" height="32" fill="#f0f0f0"/>
<circle cx="578" cy="781" r="7" fill="#fff" stroke="#aaa"/><path d="M575 782.500l3-3 3 3" fill="none" stroke="#888"/>
<text x="592" y="784.500" class="d" textLength="48" lengthAdjust="spacingAndGlyphs">Hide details</text>
<rect x="964.500" y="773.500" width="51" height="16.500" fill="#e1e1e1" stroke="#adadad"/>
<text x="984" y="785.500" class="d" textLength="12" lengthAdjust="spacingAndGlyphs">OK</text>

<!-- TASKBAR -->
<rect x="56" y="829" width="1487.500" height="31" fill="#020716"/>
<g fill="#fff"><path d="M68.500 840l5.500-.8v5.300h-5.500zM75 839l6.700-1v6.500H75zM68.500 845.500H74v5.300l-5.500-.8zM75 845.500h6.700v6.500l-6.700-1z"/></g>
<circle cx="113" cy="842" r="4.500" fill="none" stroke="#fff" stroke-width="1.100"/><path d="M110 845.500l-4.500 5" stroke="#fff" stroke-width="1.300"/>
<rect x="144" y="840" width="10" height="9.500" fill="none" stroke="#fff" stroke-width="1.100"/><path d="M142 841v7.500M156.500 841v7.500" stroke="#fff"/>
<rect x="180.500" y="837" width="17" height="14.500" rx="1" fill="#f4c95d"/><rect x="180.500" y="837" width="17" height="3" fill="#e8b43a"/><rect x="186" y="846" width="6" height="5.500" fill="#1f8ed6"/><rect x="181" y="851" width="16" height="1.500" fill="#2aa0e0"/>
<rect x="218" y="836" width="17" height="16.500" fill="#eef4f8"/><path d="M226.500 838l6 3v7l-6 3-6-3v-7zM220.500 841l6 3 6-3M226.500 844v7" fill="none" stroke="#2aa0d6" stroke-width="1.100"/>
<circle cx="264.500" cy="845" r="8.500" fill="#ea4335"/><path d="M264.500 845l-7.500-1a8.500 8.500 0 0 0 3.700 8.500z" fill="#34a853"/><path d="M264.500 845l4 7.500a8.500 8.500 0 0 0 3.500-11z" fill="#fbbc05"/><circle cx="264.500" cy="845" r="3.700" fill="#4285f4" stroke="#fff"/>
<rect x="284" y="829" width="37" height="31" fill="#2d3544"/><rect x="284" y="858.500" width="37" height="1.500" fill="#76b9ed"/>
<path d="M302 838c3-3 10-2 9 4-1 5-6 8-9 10-3-2-8-5-9-10-1-6 6-7 9-4z" fill="#e8e8e8"/><text x="295" y="846" class="n b" style="font-size:6.500px" textLength="14" lengthAdjust="spacingAndGlyphs">woof</text>
<path d="M1420 847.500v-8h12.500v8zM1422 851h6M1425 847.500v3.500M1419 846h3v5h-3z" fill="none" stroke="#fff" stroke-width=".9"/>
<path d="M1438 843h2l3-3v10l-3-3h-2zM1445 842c1 2 1 4 0 6M1447 840.500c2 3 2 6 0 9" fill="none" stroke="#fff" stroke-width=".9"/>
<path d="M1460 851l2-3 7-8c2-2 3 0 2 1l-8 8zM1462 848c-3 0-2-3 0-3" fill="none" stroke="#fff" stroke-width="1"/>
<rect x="1481" y="841" width="16.500" height="8.500" fill="none" stroke="#fff"/><path d="M1483 843h13M1483 845h13M1485 847.500h9" stroke="#fff" stroke-dasharray="1 1" stroke-width=".8"/>
<text x="1516" y="841" class="w" textLength="21" lengthAdjust="spacingAndGlyphs">18:39</text>
<text x="1509.500" y="855" class="w" textLength="34" lengthAdjust="spacingAndGlyphs">2/4/2021</text>
<rect x="1543.500" y="829" width="57" height="31" fill="#000"/>
</svg>
</body></html>
